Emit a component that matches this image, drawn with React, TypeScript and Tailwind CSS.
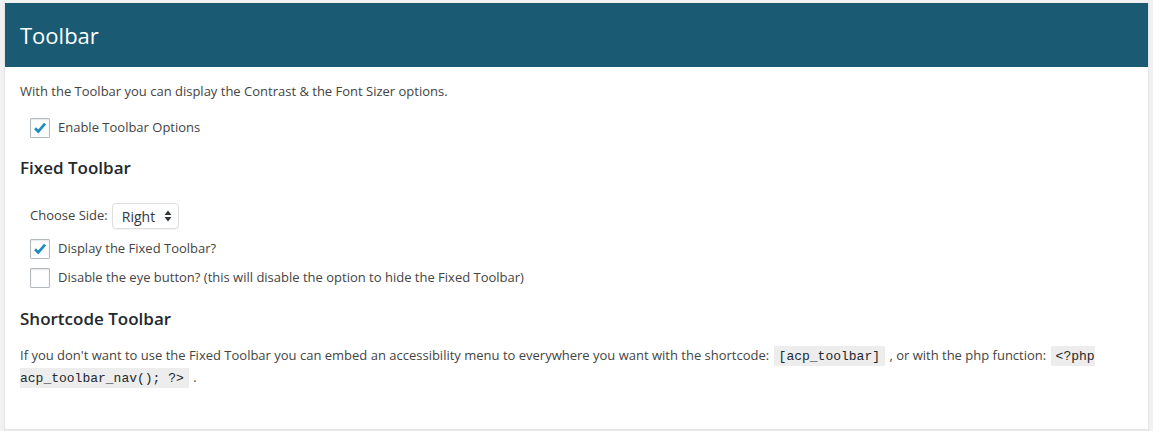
import React from "react";

const Check = ({ checked }: { checked: boolean }) => (
  <span className="flex h-[20px] w-[20px] shrink-0 items-center justify-center rounded-[1px] border border-[#b4b9be] bg-white shadow-[inset_0_1px_2px_rgba(0,0,0,0.1)]">
    {checked && (
      <svg width="18" height="18" viewBox="0 0 20 20">
        <path d="M4.5 10.2l3.6 3.6L15.6 5.2" fill="none" stroke="#1e8cbe" strokeWidth="3" strokeLinejoin="miter" />
      </svg>
    )}
  </span>
);

const Row = ({ checked, label, cls }: { checked: boolean; label: string; cls: string }) => (
  <div className={`flex h-[20px] items-center gap-[8px] pl-[10px] ${cls}`}>
    <Check checked={checked} />
    <span>{label}</span>
  </div>
);

const codeCls =
  "bg-[rgba(0,0,0,0.07)] px-[5px] pt-[3px] pb-[2px] mx-[1px] text-[13px] font-['Liberation_Mono','DejaVu_Sans_Mono',monospace] text-[#23282d]";

export default function App() {
  return (
    <div className="min-h-screen bg-[#f1f1f1] px-[4px] pt-[3px] font-['Open_Sans',sans-serif] text-[13px] text-[#444]">
      <div className="border border-t-0 border-[#e5e5e5] bg-white shadow-[0_1px_1px_rgba(0,0,0,0.04)]">
        <div className="flex h-[64px] items-center bg-[#1a5a73] pl-[15px]">
          <h2 className="text-[22px] font-normal leading-none text-white">Toolbar</h2>
        </div>
        <div className="px-[15px] pb-[40px]">
          <p className="mt-[14px] h-[20px] leading-[20px]">
            With the Toolbar you can display the Contrast &amp; the Font Sizer options.
          </p>
          <Row checked label="Enable Toolbar Options" cls="mt-[17px]" />
          <h3 className="mt-[18px] h-[24px] text-[17px] font-semibold leading-[24px] text-[#23282d]">
            Fixed Toolbar
          </h3>
          <div className="mt-[23px] flex h-[26px] items-center gap-[4px] pl-[10px]">
            <span>Choose Side:</span>
            <div className="flex h-[26px] w-[67px] items-center justify-between rounded-[4px] border border-[#ddd] bg-white pl-[9px] pr-[6px] text-[14px] text-[#32373c] shadow-[0_1px_1px_rgba(0,0,0,0.04)]">
              <span>Right</span>
              <svg width="8" height="12" viewBox="0 0 8 12">
                <path d="M4 0.5L7.5 5H0.5z M4 11.5L7.5 7H0.5z" fill="#32373c" />
              </svg>
            </div>
          </div>
          <Row checked label="Display the Fixed Toolbar?" cls="mt-[10px]" />
          <Row
            checked={false}
            label="Disable the eye button? (this will disable the option to hide the Fixed Toolbar)"
            cls="mt-[9px]"
          />
          <h3 className="mt-[19px] h-[24px] text-[17px] font-semibold leading-[24px] text-[#23282d]">
            Shortcode Toolbar
          </h3>
          <p className="mt-[14px] leading-[20px]">
            If you don't want to use the Fixed Toolbar you can embed an accessibility menu to everywhere you want with the shortcode:{" "}
            <code className={codeCls}>[acp_toolbar]</code> , or with the php function:{" "}
            <code className={codeCls}>&lt;?php acp_toolbar_nav(); ?&gt;</code> .
          </p>
        </div>
      </div>
    </div>
  );
}
